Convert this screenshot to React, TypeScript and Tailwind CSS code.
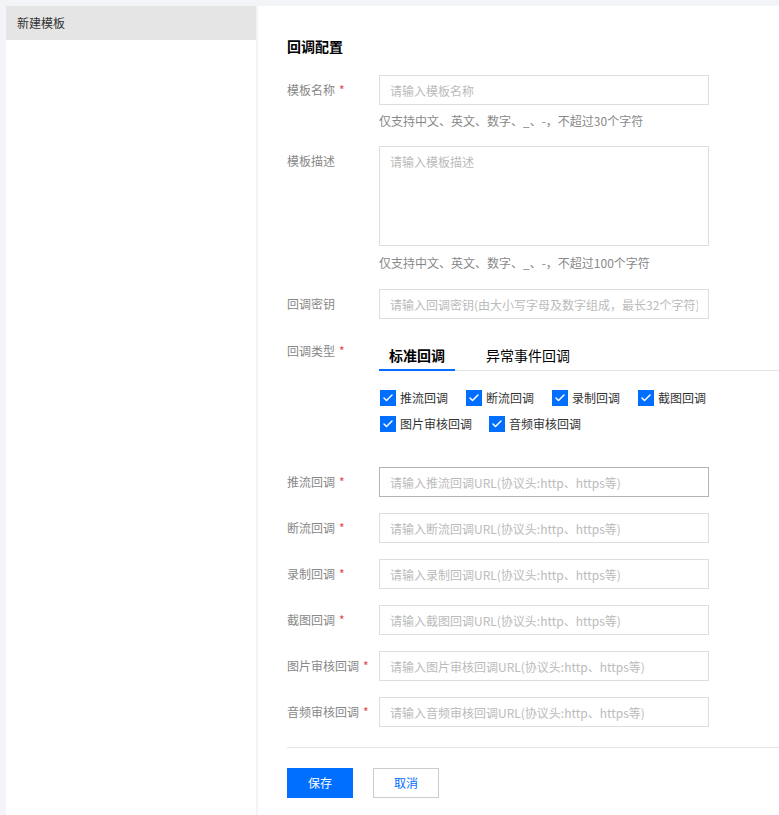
import { Check } from 'lucide-react';

const CHECKS_ROW1 = ['推流回调', '断流回调', '录制回调', '截图回调'];
const CHECKS_ROW2 = ['图片审核回调', '音频审核回调'];

const URL_FIELDS = [
  { label: '推流回调', name: '推流回调', strong: true },
  { label: '断流回调', name: '断流回调' },
  { label: '录制回调', name: '录制回调' },
  { label: '截图回调', name: '截图回调' },
  { label: '图片审核回调', name: '图片审核回调' },
  { label: '音频审核回调', name: '音频审核回调' },
];

function Label({ text, required }: { text: string; required?: boolean }) {
  return (
    <div className="w-[92px] shrink-0 text-[12px] leading-[30px] text-[#888]">
      {text}
      {required && <span className="ml-[4px] text-[#e54545]">*</span>}
    </div>
  );
}

function TextInput({ placeholder, strong }: { placeholder: string; strong?: boolean }) {
  return (
    <input
      placeholder={placeholder}
      className={`h-[30px] w-[330px] border px-[10px] text-[12px] text-[#333] outline-none placeholder:text-[#bbb] ${
        strong ? 'border-[#b4b4b4]' : 'border-[#ddd]'
      }`}
    />
  );
}

function CheckItem({ text }: { text: string }) {
  return (
    <label className="flex items-center gap-[4px] text-[12px] text-[#333]">
      <span className="flex h-[16px] w-[16px] items-center justify-center bg-[#006eff]">
        <Check size={12} strokeWidth={3} color="#fff" />
      </span>
      {text}
    </label>
  );
}

export default function App() {
  return (
    <div
      className="flex min-h-[815px] gap-[2px] bg-[#f3f4f7] pl-[6px] pt-[6px]"
      style={{ fontFamily: '"Noto Sans CJK SC", "Noto Sans", sans-serif' }}
    >
      <aside className="w-[250px] shrink-0 bg-white">
        <div className="h-[34px] bg-[#e5e5e5] pl-[11px] text-[12px] leading-[34px] text-[#333]">新建模板</div>
      </aside>

      <main className="flex-1 bg-white pl-[29px] pt-[31px]">
        <h2 className="text-[14px] font-bold leading-[18px] text-black">回调配置</h2>

        <div className="mt-[20px] flex">
          <Label text="模板名称" required />
          <div>
            <TextInput placeholder="请输入模板名称" />
            <p className="mt-[8px] text-[12px] leading-[16px] text-[#888]">仅支持中文、英文、数字、_、-，不超过30个字符</p>
          </div>
        </div>

        <div className="mt-[17px] flex">
          <div className="w-[92px] shrink-0 text-[12px] leading-[30px] text-[#888]">模板描述</div>
          <div>
            <textarea
              placeholder="请输入模板描述"
              className="block h-[100px] w-[330px] resize-none border border-[#ddd] px-[10px] py-[6px] text-[12px] text-[#333] outline-none placeholder:text-[#bbb]"
            />
            <p className="mt-[9px] text-[12px] leading-[16px] text-[#888]">仅支持中文、英文、数字、_、-，不超过100个字符</p>
          </div>
        </div>

        <div className="mt-[18px] flex">
          <Label text="回调密钥" />
          <TextInput placeholder="请输入回调密钥(由大小写字母及数字组成，最长32个字符)" />
        </div>

        <div className="mt-[18px] flex">
          <div className="w-[92px] shrink-0 pt-[5px] text-[12px] leading-[18px] text-[#888]">
            回调类型<span className="ml-[4px] text-[#e54545]">*</span>
          </div>
          <div className="flex-1">
            <div className="flex border-b border-[#e5e5e5]">
              <div className="-mb-px border-b-2 border-[#006eff] px-[10px] pb-[4px] pt-[8px] text-[14px] font-bold leading-[20px] text-black">
                标准回调
              </div>
              <div className="ml-[21px] px-[10px] pb-[4px] pt-[8px] text-[14px] leading-[20px] text-black">异常事件回调</div>
            </div>
            <div className="mt-[18px] flex flex-col gap-[8px] pl-[1px]">
              <div className="flex gap-[18px]">
                {CHECKS_ROW1.map((c) => (
                  <CheckItem key={c} text={c} />
                ))}
              </div>
              <div className="flex gap-[17px]">
                {CHECKS_ROW2.map((c) => (
                  <CheckItem key={c} text={c} />
                ))}
              </div>
            </div>
          </div>
        </div>

        <div className="mt-[34px] flex flex-col gap-[16px]">
          {URL_FIELDS.map((f) => (
            <div key={f.name} className="flex">
              <Label text={f.label} required />
              <TextInput placeholder={`请输入${f.name}URL(协议头:http、https等)`} strong={f.strong} />
            </div>
          ))}
        </div>

        <div className="mt-[20px] border-t border-[#e5e5e5]" />

        <div className="mt-[20px] flex gap-[20px] pb-[17px]">
          <button className="h-[30px] w-[66px] bg-[#006eff] text-[12px] text-white">保存</button>
          <button className="h-[30px] w-[66px] border border-[#ccc] bg-white text-[12px] text-[#006eff]">取消</button>
        </div>
      </main>
    </div>
  );
}
